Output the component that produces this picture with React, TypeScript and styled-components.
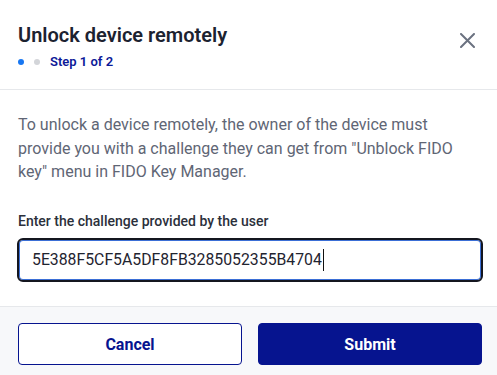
import React from "react";
import styled, { createGlobalStyle } from "styled-components";

const Global = createGlobalStyle`
  html, body { margin: 0; padding: 0; background: #ffffff; }
  body { font-family: Roboto, "Liberation Sans", Arial, sans-serif; -webkit-font-smoothing: antialiased; }
  * { box-sizing: border-box; }
`;

const Dialog = styled.div`
  width: 497px;
  height: 375px;
  display: flex;
  flex-direction: column;
  background: #ffffff;
  overflow: hidden;
`;

const Header = styled.header`
  display: flex;
  justify-content: space-between;
  align-items: flex-start;
  padding: 21px 22px 0 18px;
  height: 90px;
  border-bottom: 1px solid #e6e8eb;
`;

const TitleBlock = styled.div`
  display: flex;
  flex-direction: column;
`;

const Title = styled.h1`
  margin: 0;
  font-size: 20px;
  line-height: 28px;
  font-weight: 600;
  color: #1c2230;
`;

const StepRow = styled.div`
  display: flex;
  align-items: center;
  gap: 10px;
  margin-top: 4px;
`;

const Dot = styled.span<{ $active?: boolean }>`
  width: 6px;
  height: 6px;
  border-radius: 50%;
  background: ${(p) => (p.$active ? "#1877f2" : "#d3d5d9")};
`;

const StepText = styled.span`
  font-size: 13px;
  line-height: 18px;
  font-weight: 600;
  color: #0c1a98;
`;

const CloseButton = styled.button`
  border: none;
  background: none;
  padding: 0;
  margin-top: 11px;
  width: 16px;
  height: 16px;
  display: flex;
  align-items: center;
  justify-content: center;
  cursor: pointer;
`;

const Body = styled.main`
  flex: 1;
  padding: 23px 14px 0 18px;
  display: flex;
  flex-direction: column;
`;

const Paragraph = styled.p`
  margin: 0;
  max-width: 450px;
  font-size: 16px;
  line-height: 23.5px;
  color: #5f6675;
`;

const Label = styled.label`
  margin-top: 28px;
  font-size: 14px;
  line-height: 18px;
  font-weight: 500;
  color: #2b303b;
`;

const Input = styled.div`
  margin-top: 8px;
  margin-left: -1px;
  height: 44px;
  border: 2px solid #14161f;
  border-radius: 6px;
  box-shadow: inset 0 0 0 1px #3b6fd6;
  display: flex;
  align-items: center;
  padding-left: 13px;
  font-size: 15.8px;
  color: #1f2430;
`;

const Caret = styled.span`
  display: inline-block;
  width: 1px;
  height: 22px;
  background: #111;
  margin-left: 1px;
`;

const Footer = styled.footer`
  height: 69px;
  border-top: 1px solid #e6e8eb;
  background: #f7f8fa;
  display: grid;
  grid-template-columns: 1fr 1fr;
  gap: 16px;
  padding: 16px 15px 10px 18px;
`;

const Button = styled.button<{ $primary?: boolean }>`
  height: 42px;
  border-radius: 4px;
  border: 1.5px solid #06148f;
  background: ${(p) => (p.$primary ? "#06148f" : "#ffffff")};
  color: ${(p) => (p.$primary ? "#ffffff" : "#06148f")};
  font-family: inherit;
  font-size: 16px;
  font-weight: 700;
  cursor: pointer;
`;

export default function App() {
  return (
    <>
      <Global />
      <Dialog>
        <Header>
          <TitleBlock>
            <Title>Unlock device remotely</Title>
            <StepRow>
              <Dot $active />
              <Dot />
              <StepText>Step 1 of 2</StepText>
            </StepRow>
          </TitleBlock>
          <CloseButton aria-label="Close">
            <svg width="15" height="15" viewBox="0 0 15 15">
              <path d="M1 1 L14 14 M14 1 L1 14" stroke="#6b7280" strokeWidth="2" strokeLinecap="round" />
            </svg>
          </CloseButton>
        </Header>
        <Body>
          <Paragraph>
            To unlock a device remotely, the owner of the device must provide you with a challenge they can get from "Unblock FIDO key" menu in FIDO Key Manager.
          </Paragraph>
          <Label>Enter the challenge provided by the user</Label>
          <Input>
            5E388F5CF5A5DF8FB3285052355B4704
            <Caret />
          </Input>
        </Body>
        <Footer>
          <Button>Cancel</Button>
          <Button $primary>Submit</Button>
        </Footer>
      </Dialog>
    </>
  );
}
